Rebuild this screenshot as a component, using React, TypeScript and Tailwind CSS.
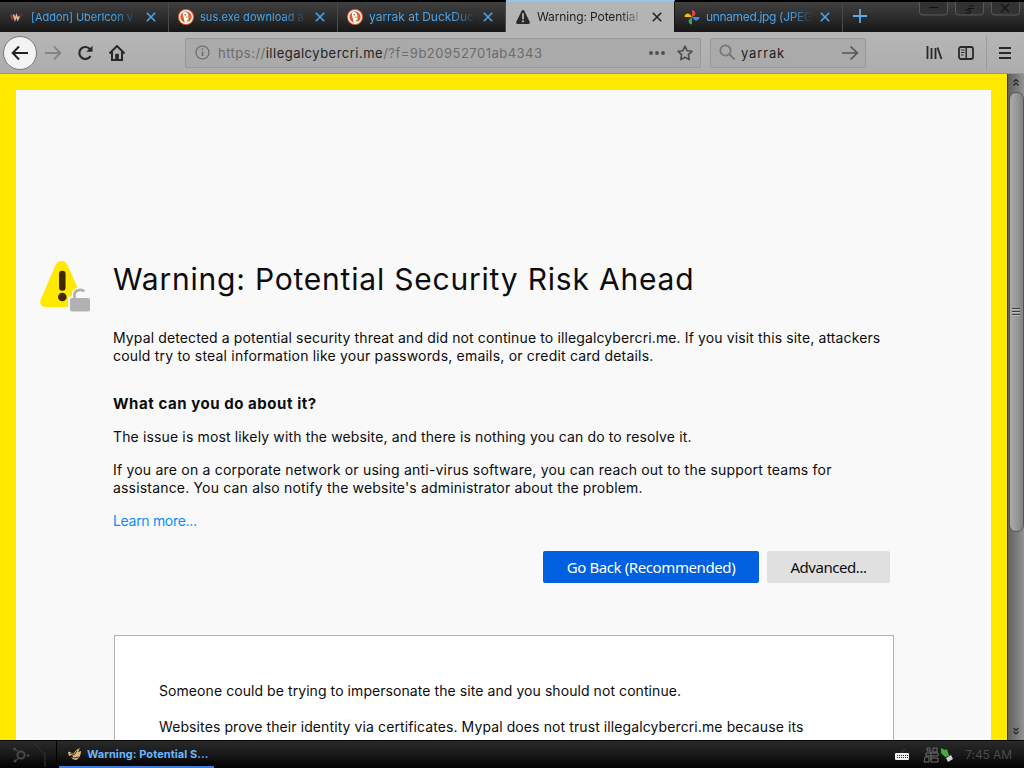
import React from "react";

const X = ({ c = "#4aa3e8" }: { c?: string }) => (
  <svg width="10" height="10" viewBox="0 0 10 10" className="shrink-0">
    <path d="M.8.8l8.4 8.4M9.2.8L.8 9.2" stroke={c} strokeWidth="1.6" fill="none" />
  </svg>
);

const Duck = () => (
  <svg width="16" height="16" viewBox="0 0 16 16" className="shrink-0">
    <circle cx="8" cy="8" r="8" fill="#e8623a" />
    <circle cx="8" cy="8" r="6.3" fill="#dc5a30" stroke="#fff" strokeWidth="1.3" />
    <path d="M5 4c1-1.400 4.500-1.300 5.200 1.300.4 1.600-.2 2.500.1 4l.7 3.500c-1.200.9-3.200 1.100-4.200.7L5.600 8.500C4.800 6.500 4.600 5.200 5 4z" fill="#fff" />
    <path d="M8 7.500l3.400.2-.3 1.200-3 .2z" fill="#f5b52e" />
    <circle cx="7.200" cy="5.800" r=".7" fill="#335" />
    <path d="M8.700 11l2.200-.6.100 2-2 .2z" fill="#62b545" />
  </svg>
);

const Mozilla = () => (
  <svg width="16" height="16" viewBox="0 0 16 16" className="shrink-0">
    <path d="M2 5.500l1.500 5" stroke="#b23325" strokeWidth="2" fill="none" />
    <path d="M4.500 5.500l1.500 5 1.500-4 1.300 4L10.500 7" stroke="#d8bd9a" strokeWidth="1.600" fill="none" />
    <path d="M11 8l1.800-3" stroke="#8c2538" strokeWidth="1.600" />
  </svg>
);

const Alert = () => (
  <svg width="16" height="16" viewBox="0 0 16 16" className="shrink-0">
    <path d="M8 1c.7 0 1.100.4 1.400.9l5.300 10.900c.5 1-.1 2.200-1.300 2.200H2.600c-1.200 0-1.800-1.200-1.300-2.200L6.600 1.900C6.900 1.400 7.300 1 8 1z" fill="#2a2a2a" />
    <path d="M8 5v4.500" stroke="#b4b4b4" strokeWidth="1.800" strokeLinecap="round" />
    <circle cx="8" cy="12.300" r="1.100" fill="#b4b4b4" />
  </svg>
);

const Photos = () => (
  <svg width="16" height="16" viewBox="0 0 16 16" className="shrink-0">
    <path d="M8 8V1c3 0 4.500 3.500 2.500 5.500z" fill="#e94335" />
    <path d="M8 8h7.500c0 3-3.500 4.500-5.500 2.500z" fill="#4a86e8" />
    <path d="M8 8v7.500c-3 0-4.500-3.500-2.500-5.500z" fill="#35a853" />
    <path d="M8 8H.5C.5 5 4 3.500 6 5.500z" fill="#f6bb12" />
  </svg>
);

const tabs = [
  { t: "[Addon] UberIcon v", icon: <Mozilla />, cls: "w-[169px]", txt: "text-[11px] tracking-[-0.04px]" },
  { t: "sus.exe download a", icon: <Duck />, cls: "w-[169px]", txt: "text-[11px] tracking-[0.05px]" },
  { t: "yarrak at DuckDuc", icon: <Duck />, cls: "w-[168px]", txt: "text-[12px] tracking-[-0.02px]" },
  { t: "Warning: Potential", icon: <Alert />, cls: "w-[169px]", txt: "text-[12px] tracking-[-0.1px]", active: true },
  { t: "unnamed.jpg (JPEG", icon: <Photos />, cls: "w-[168px]", txt: "text-[12px] tracking-[-0.35px]" },
];

function TabStrip() {
  return (
    <div className="flex h-8 shrink-0 border-t-2 border-black bg-linear-to-b from-[#404040] via-[#2d2d2d] to-[#161616]">
      {tabs.map((tab) => (
        <div
          key={tab.t}
          className={`${tab.cls} flex shrink-0 items-center border-r pr-3 pl-[9px] ${
            tab.active
              ? "-mt-[2px] border-t-2 border-t-[#8fc9e5] border-r-[#161616] bg-[#b4b4b4] text-[#222]"
              : "border-r-[#4a4a4a] text-[#4aa3e8]"
          }`}
        >
          {tab.icon}
          <span
            className={`ml-[6px] w-[107px] whitespace-nowrap ${tab.txt} [mask-image:linear-gradient(to_right,black_78%,transparent)]`}
          >
            {tab.t}
          </span>
          <span className="ml-auto flex">
            <X c={tab.active ? "#222" : "#4aa3e8"} />
          </span>
        </div>
      ))}
      <div className="flex w-[33px] items-center justify-center pb-[2px]">
        <svg width="14" height="14" viewBox="0 0 14 14">
          <path d="M7 0v14M0 7h14" stroke="#5aace8" strokeWidth="1.800" />
        </svg>
      </div>
      <div className="ml-auto flex gap-[7px] pr-1">
        {["M10 5.500h9", "M10 8h5v3h-5M14 4h5M13 6.500h6", "M10 2l8 8M18 2l-8 8"].map((d) => (
          <svg key={d} width="29" height="14" viewBox="0 0 29 14">
            <path d="M.5 0v10q0 3 3 3h22q3 0 3-3V0" fill="#323232" stroke="#585858" />
            <path d={d} stroke="#121212" strokeWidth="1.200" fill="none" />
          </svg>
        ))}
      </div>
    </div>
  );
}

function Toolbar() {
  return (
    <div className="flex h-[42px] shrink-0 items-center border-b border-[#949494] bg-linear-to-b from-[#b6b6b6] to-[#adadad] text-[#222]">
      <div className="ml-[3px] flex size-[34px] items-center justify-center rounded-full border border-[#777] bg-[#f3f3f3]">
        <svg width="18" height="16" viewBox="0 0 18 16">
          <path d="M17 8H2M8 1.500L1.700 8 8 14.500" stroke="#222" strokeWidth="2" fill="none" />
        </svg>
      </div>
      <svg className="ml-2" width="17" height="16" viewBox="0 0 17 16">
        <path d="M0 8h15M9 1.500L15.300 8 9 14.500" stroke="#858585" strokeWidth="1.900" fill="none" />
      </svg>
      <svg className="ml-[15px]" width="17" height="16" viewBox="0 0 17 16">
        <path d="M13.200 4.500A6 6 0 1 0 13.500 11" stroke="#292929" strokeWidth="2.200" fill="none" />
        <path d="M15.500.800v6H9.300z" fill="#292929" />
      </svg>
      <svg className="ml-[15px]" width="16" height="16" viewBox="0 0 16 16">
        <path d="M.500 8.500L8 1l7.500 7.500M3 7v8h10V7" stroke="#292929" strokeWidth="2" fill="none" />
        <path d="M6.200 14.500V8.800h3.600v5.700z" fill="#292929" />
      </svg>
      <div className="ml-[60px] flex h-[30px] w-[516px] items-center rounded-[2px] border border-[#989898] bg-[#aaaaaa] pr-[10px] pl-[9px]">
        <svg width="15" height="15" viewBox="0 0 15 15">
          <circle cx="7.500" cy="7.500" r="6.500" stroke="#696969" fill="none" strokeWidth="1.200" />
          <path d="M7.500 6.500v4.500M7.500 3.600v1.500" stroke="#696969" strokeWidth="1.500" />
        </svg>
        <span className="ml-[8px] pt-[2px] text-[13px] tracking-[0.49px] whitespace-nowrap text-[#6c6c6c]">
          https://<span className="text-[#222]">illegalcybercri.me</span>/?f=9b20952701ab4343
        </span>
        <svg className="ml-auto" width="16" height="6" viewBox="0 0 16 6">
          <circle cx="2" cy="3" r="1.900" fill="#4d4d4d" />
          <circle cx="8" cy="3" r="1.900" fill="#4d4d4d" />
          <circle cx="14" cy="3" r="1.900" fill="#4d4d4d" />
        </svg>
        <svg className="ml-3 -mr-[3px]" width="16" height="16" viewBox="0 0 16 16">
          <path d="M8 1.200l2.100 4.500 4.900.6-3.600 3.400.9 4.900L8 12.200l-4.300 2.400.9-4.900L1 6.300l4.900-.6z" stroke="#4d4d4d" strokeWidth="1.600" strokeLinejoin="round" fill="none" />
        </svg>
      </div>
      <div className="ml-[9px] flex h-[30px] w-[156px] items-center rounded-[2px] border border-[#989898] bg-[#aaaaaa] pr-[6px] pl-2">
        <svg width="17" height="17" viewBox="0 0 17 17">
          <circle cx="6.500" cy="6.500" r="5.200" stroke="#777" strokeWidth="1.800" fill="none" />
          <path d="M10.300 10.300l5.400 5.200" stroke="#777" strokeWidth="2" />
        </svg>
        <span className="ml-[5px] pt-[2px] text-[13px] tracking-[0.85px]">yarrak</span>
        <svg className="ml-auto" width="17" height="16" viewBox="0 0 17 16">
          <path d="M0 8h15M8.500 1.500L15.300 8l-6.800 6.500" stroke="#555" strokeWidth="1.700" fill="none" />
        </svg>
      </div>
      <svg className="ml-[60px]" width="17" height="16" viewBox="0 0 17 16">
        <path d="M1.500 1v13M5.500 3v11M9.500 3v11M11.500 2.500l4 11.500" stroke="#292929" strokeWidth="1.800" fill="none" />
      </svg>
      <svg className="ml-[15px]" width="16" height="14" viewBox="0 0 16 14">
        <rect x="1" y="1" width="14" height="12" rx="2" stroke="#292929" strokeWidth="1.800" fill="none" />
        <path d="M8.200 1v12" stroke="#292929" strokeWidth="1.500" />
        <path d="M3 4h3.500M3 6.500h3.500M3 9h2.500" stroke="#292929" />
      </svg>
      <div className="ml-3 h-[34px] w-px bg-[#9b9b9b]" />
      <svg className="ml-3" width="13" height="12" viewBox="0 0 13 12">
        <path d="M0 1h12M0 6h12M0 11h12" stroke="#292929" strokeWidth="2" />
      </svg>
    </div>
  );
}

const WarningIcon = () => (
  <svg className="mt-[169px] ml-[23px] shrink-0" width="52" height="54" viewBox="0 0 52 54">
    <path d="M22.500 2c2.700 0 4.700 1.400 6 4l15 34c1.600 4-.4 8-4.500 8H6.500c-4.500 0-6.500-4-4.500-8L16.500 6c1.300-2.600 3.300-4 6-4z" fill="#ffe900" />
    <path d="M23.300 15v13.500" stroke="#3e2800" strokeWidth="6.500" strokeLinecap="round" />
    <circle cx="23.300" cy="38" r="4.300" fill="#3e2800" />
    <path d="M29 54V38l4-1v-4c2-5 10-6 14 0v4h5v17z" fill="#f9f9fa" />
    <path d="M35.500 40v-4c0-6 8-6 9.500-3.500" stroke="#b1b1b3" strokeWidth="2.800" fill="none" />
    <rect x="31" y="39" width="20" height="13.500" rx="2" fill="#b1b1b3" />
  </svg>
);

function Page() {
  return (
    <div className="h-full w-[1007px] overflow-hidden border-[16px] border-b-0 border-[#ffe900] bg-[#f9f9fa] text-[#0c0c0d]">
      <div className="flex">
        <WarningIcon />
        <div className="w-[783px] pl-[22px] text-[14px] leading-[18px] whitespace-nowrap">
          <h1 className="mt-[169px] text-[30px] leading-[40px] tracking-[0.79px]">Warning: Potential Security Risk Ahead</h1>
          <p className="mt-[30px] tracking-[0.125px]">Mypal detected a potential security threat and did not continue to illegalcybercri.me. If you visit this site, attackers</p>
          <p className="tracking-[0.2px]">could try to steal information like your passwords, emails, or credit card details.</p>
          <h2 className="mt-[30px] text-[15px] font-bold tracking-[0.55px]">What can you do about it?</h2>
          <p className="mt-[15px] tracking-[0.14px]">The issue is most likely with the website, and there is nothing you can do to resolve it.</p>
          <p className="mt-[15px] tracking-[0.2px]">If you are on a corporate network or using anti-virus software, you can reach out to the support teams for</p>
          <p className="tracking-[0.18px]">assistance. You can also notify the website's administrator about the problem.</p>
          <p className="mt-[15px] tracking-[-0.31px] text-[#0a8dff]">Learn more...</p>
          <div className="mt-[21px] -mr-[16px] flex justify-end gap-2 font-['Noto_Sans',sans-serif] text-[15px]">
            <button className="h-8 w-[216px] rounded-[2px] bg-[#0060df] tracking-[-0.4px] text-white">Go Back (Recommended)</button>
            <button className="h-8 w-[123px] rounded-[2px] bg-[#e0e0e1] tracking-[-0.45px]">Advanced...</button>
          </div>
          <div className="mt-[52px] ml-px h-[120px] w-[780px] border border-[#b1b1b3] bg-white pt-[46px] pl-[44px]">
            <p className="tracking-[0.07px]">Someone could be trying to impersonate the site and you should not continue.</p>
            <p className="mt-[18px] tracking-[0.1px]">Websites prove their identity via certificates. Mypal does not trust illegalcybercri.me because its</p>
          </div>
        </div>
      </div>
    </div>
  );
}

function Scrollbar() {
  return (
    <div className="flex w-[17px] flex-col items-center border-l border-[#333] bg-linear-to-r from-[#606060] to-[#929292]">
      <svg width="8" height="18" viewBox="0 0 8 18">
        <path d="M1.500 8L4 5.500 6.500 8M1.500 11.500L4 9l2.500 2.500" stroke="#222" strokeWidth="1.200" fill="none" />
      </svg>
      <div className="flex h-[440px] w-[15px] items-center justify-center rounded-[7px] border border-[#555] bg-linear-to-r from-[#aaa] via-[#999] to-[#828282]">
        <svg width="8" height="9" viewBox="0 0 8 9">
          <path d="M0 .5h8M0 3.500h8M0 6.500h8" stroke="#3c3c3c" />
          <path d="M0 1.500h8M0 4.500h8M0 7.500h8" stroke="#bbb" />
        </svg>
      </div>
      <svg className="mt-auto" width="8" height="18" viewBox="0 0 8 18">
        <path d="M1.500 6L4 8.500 6.500 6M1.500 9.500L4 12l2.500-2.500" stroke="#222" strokeWidth="1.200" fill="none" />
      </svg>
    </div>
  );
}

function Taskbar() {
  return (
    <div className="flex h-7 shrink-0 items-center border-t border-[#080808] bg-linear-to-b from-[#292929] via-[#191919] to-[#030303]">
      <div className="flex h-full w-[57px] items-center border-r border-black pl-[12px]">
        <svg width="36" height="24" viewBox="0 0 36 24">
          <circle cx="9" cy="12" r="3.600" stroke="#484848" strokeWidth="2" fill="none" />
          <path d="M7 9L2.500 6M7 15l-4 3" stroke="#444" strokeWidth="1.500" />
          <circle cx="2.500" cy="6" r="1.500" fill="#484848" />
          <circle cx="3" cy="18" r="1.500" fill="#484848" />
          <circle cx="16" cy="12.500" r="1.300" fill="#484848" />
          <path d="M21 0l12 11v13" stroke="#363636" fill="none" />
        </svg>
      </div>
      <div className="ml-[2px] flex h-[26px] w-[155px] items-center border-b-2 border-[#3d7edb] pl-2 text-[#6ab7ff]">
        <svg width="16" height="16" viewBox="0 0 16 16">
          <path d="M1 6c3-1 4 3 6 1 2-3 4-4 6-5l-2 4 3-1c0 4-2 8-5 9-2 0-4-1-5-3l3 1-2-3-3 1z" fill="#d9b77d" />
          <path d="M3 7l4 2 3-4M7 12l5-1" stroke="#49331f" fill="none" />
        </svg>
        <span className="ml-[4px] pt-[2px] text-[11px] font-bold tracking-[0.07px] whitespace-nowrap">Warning: Potential S...</span>
      </div>
      <div className="ml-auto flex items-center pr-[12px]">
        <svg width="14" height="14" viewBox="0 0 14 14">
          <path d="M7 5V3l3-2" stroke="#444" fill="none" />
          <rect y="5" width="14" height="7" rx="1" fill="#eee" />
          <path d="M2 7.500h11M2 9.500h11" stroke="#222" strokeDasharray="1 1" />
        </svg>
        <svg className="ml-[14px]" width="32" height="18" viewBox="0 0 32 18">
          <path d="M4 2h3v3H4zM10 2h4v4h-4zM3 7h12v3H3zM2 11h4v5H1zM8 12h7v4H8zM8 5v9" stroke="#6c6c6c" fill="none" />
          <path d="M18 2l4 2 2-1 2 7-4 1-4-4z" fill="#3eac3e" />
          <path d="M23 12l5-3 2 4-5 3z" fill="#c8d4cc" />
        </svg>
        <span className="ml-[10px] text-[12px] tracking-[-0.1px] text-[#4c4c4c]">7:45 AM</span>
      </div>
    </div>
  );
}

export default function App() {
  return (
    <div className="flex h-[768px] w-[1024px] flex-col overflow-hidden font-[Inter,'Liberation_Sans',sans-serif]">
      <TabStrip />
      <Toolbar />
      <div className="flex min-h-0 flex-1">
        <Page />
        <Scrollbar />
      </div>
      <Taskbar />
    </div>
  );
}
